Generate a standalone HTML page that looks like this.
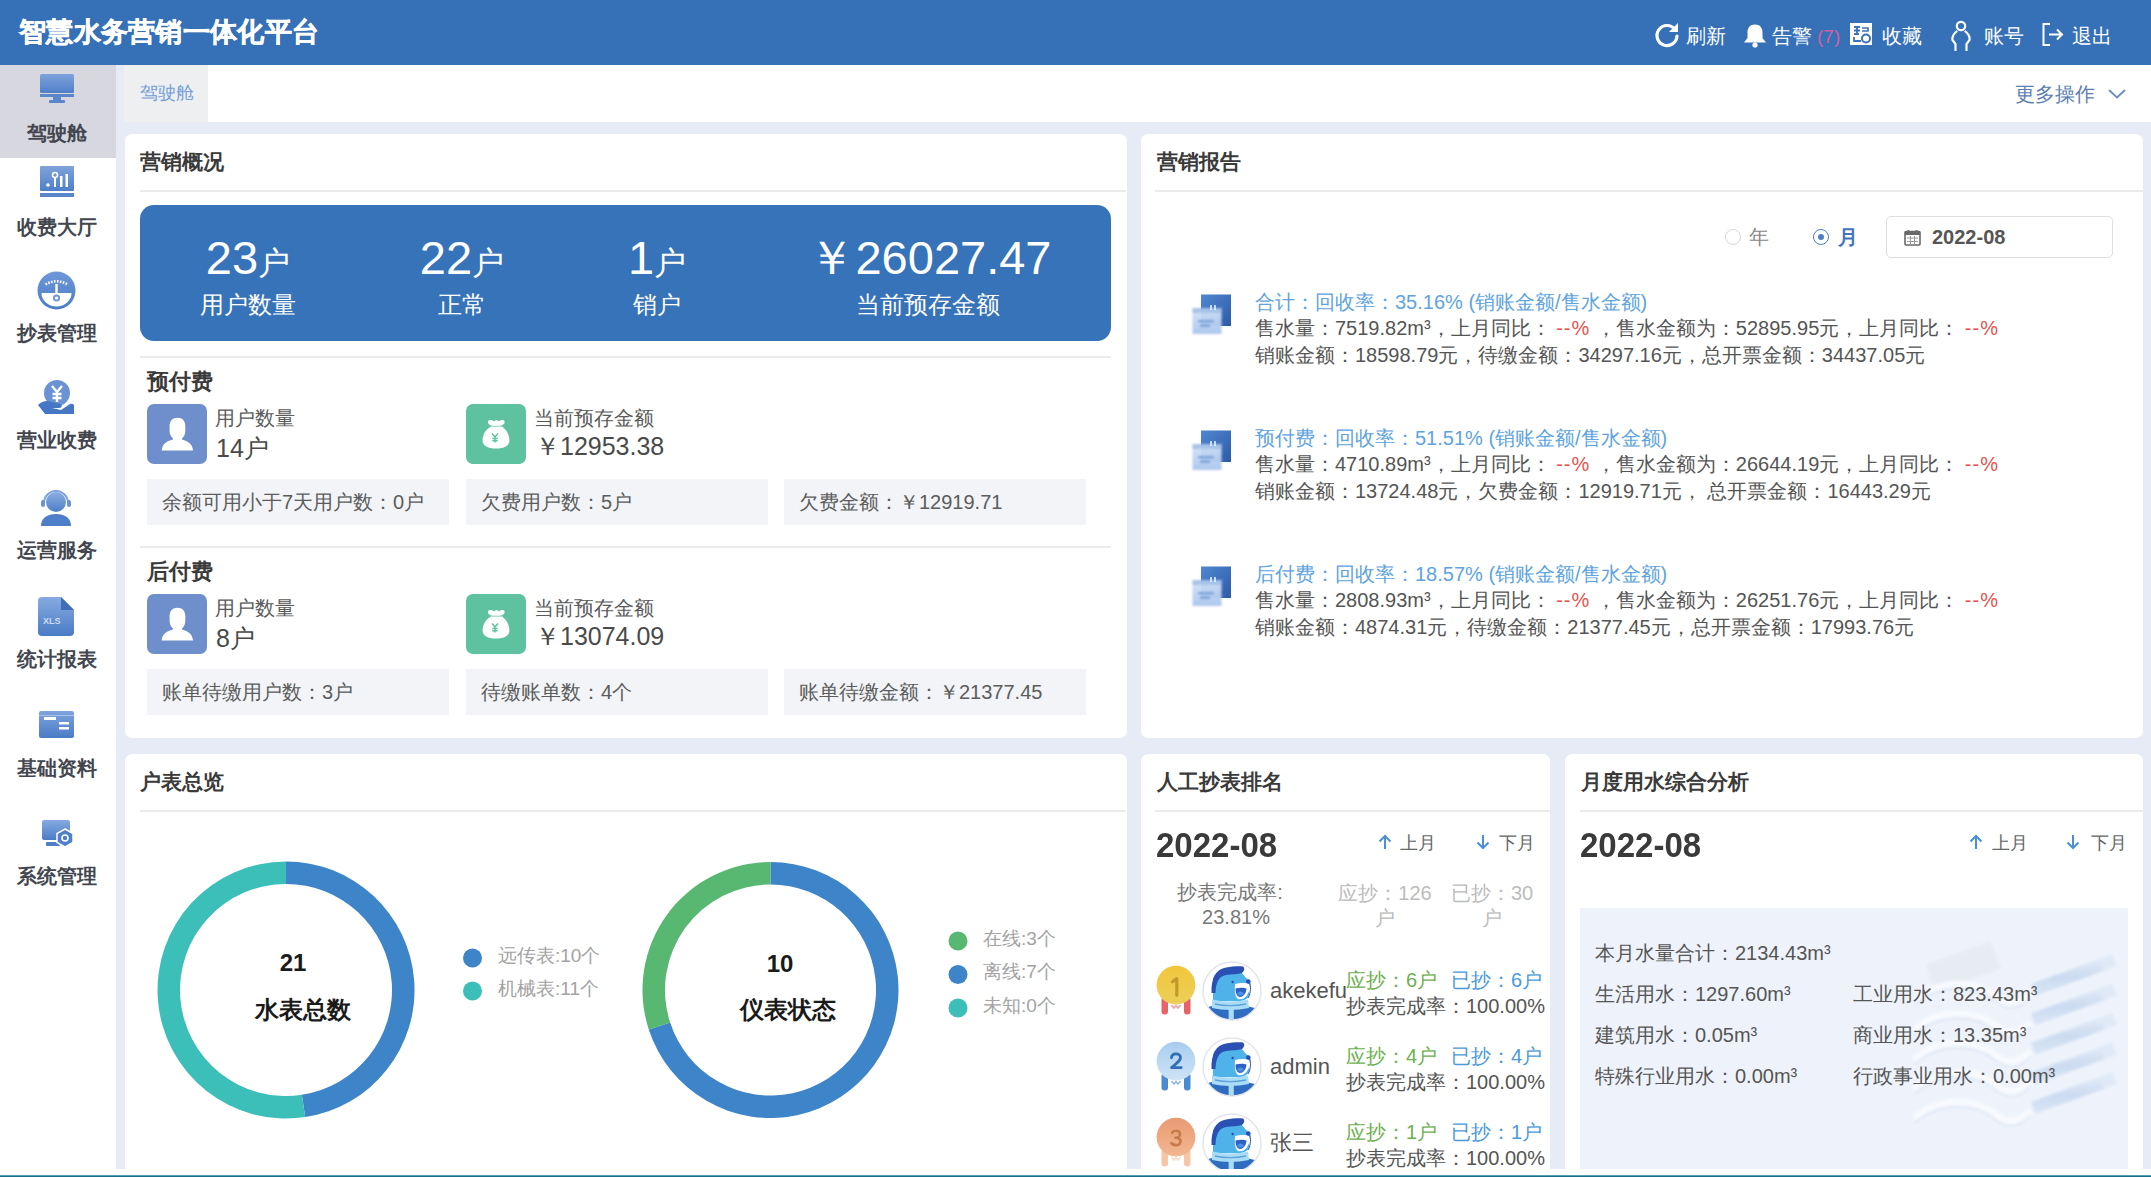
<!DOCTYPE html>
<html><head><meta charset="utf-8">
<style>
*{margin:0;padding:0;box-sizing:border-box}
html,body{width:2151px;height:1177px;overflow:hidden}
body{position:relative;background:#e7ebf5;font-family:"Liberation Sans",sans-serif;color:#333}
.a{position:absolute;white-space:nowrap}
#hdr{left:0;top:0;width:2151px;height:65px;background:#3671b8}
#side{left:0;top:65px;width:116px;height:1104px;background:#fff}
#tabbar{left:124px;top:65px;width:2027px;height:57px;background:#fff}
.panel{position:absolute;background:#fff;border-radius:7px}
.ptitle{position:absolute;font-size:21px;line-height:21px;font-weight:bold;color:#3a3a3a}
.pline{position:absolute;height:2px;background:#ebebeb}
#bottom{left:0;top:1169px;width:2151px;height:8px;background:#fff}
#tealine{left:0;top:1175px;width:2151px;height:2px;background:linear-gradient(#7fc3d3,#1a6e8a 60%)}
.sitem{position:absolute;left:0;width:114px;text-align:center;font-size:20px;line-height:20px;font-weight:bold;color:#43464f}
.stat{position:absolute;top:233px;width:300px;text-align:center;color:#fff;white-space:nowrap}
.stat .n{font-size:47px;line-height:50px}
.stat .u{font-size:32px;line-height:30px}
.stat .l{font-size:24px;line-height:26px;margin-top:9px}
.ibox{position:absolute;width:60px;height:60px;border-radius:7px}
.lbl{position:absolute;font-size:20px;line-height:20px;color:#5a5a5a;white-space:nowrap}
.val{position:absolute;font-size:25px;line-height:30px;color:#4a4a4a;white-space:nowrap}
.gbox{position:absolute;width:302px;height:46px;background:#f2f4f8;font-size:20px;line-height:46px;padding-left:15px;color:#5c5c5c;white-space:nowrap}
.rl1{position:absolute;left:1255px;font-size:20px;line-height:20px;color:#5ea4de;white-space:pre}
.rl2{position:absolute;left:1255px;font-size:20px;line-height:20px;color:#555;white-space:pre}
.dn{position:absolute;width:100px;text-align:center;font-size:24px;line-height:24px;font-weight:bold;color:#1a1a1a}
.dl{position:absolute;width:200px;text-align:center;font-size:24px;line-height:24px;font-weight:bold;color:#1a1a1a}
.lg{position:absolute;font-size:19px;line-height:19px;color:#a3a3a3;white-space:nowrap}
.ym{position:absolute;font-size:33px;line-height:33px;font-weight:bold;color:#3a3a3a;white-space:nowrap;transform:scaleY(1.08);transform-origin:0 0}
.mm{position:absolute;font-size:18px;line-height:18px;color:#666;white-space:nowrap}
.wl{position:absolute;font-size:20px;line-height:20px;color:#555;white-space:nowrap}
</style></head><body>
<div id="hdr" class="a">
<div class="a" style="left:19px;top:18px;font-size:27px;line-height:28px;font-weight:bold;color:#fff;-webkit-text-stroke:0.5px #fff;letter-spacing:0.3px">智慧水务营销一体化平台</div>
<svg class="a" style="left:1653px;top:21px" width="28" height="28" viewBox="0 0 28 28"><path d="M22 8.5A10 10 0 1 0 24 15" fill="none" stroke="#fff" stroke-width="3.2" stroke-linecap="round"/><path d="M25 2v9h-9z" fill="#fff"/></svg>
<div class="a" style="left:1686px;top:26px;font-size:20px;line-height:20px;color:#fff">刷新</div>
<svg class="a" style="left:1742px;top:23px" width="26" height="26" viewBox="0 0 26 26"><path d="M13 1.5c-5 0-7.5 3.5-7.5 8v5.5L2 19.5h22l-3.5-4.5V9.5c0-4.5-2.5-8-7.5-8z" fill="#fff"/><circle cx="13" cy="22" r="2.6" fill="#fff"/></svg>
<div class="a" style="left:1772px;top:26px;font-size:20px;line-height:20px;color:#fff">告警</div>
<div class="a" style="left:1817px;top:26px;font-size:19px;line-height:21px;color:#d0609a">(7)</div>
<svg class="a" style="left:1849px;top:22px" width="25" height="25" viewBox="0 0 25 25"><rect x="1" y="1" width="22" height="22" fill="#fff"/><path d="M5 5h6M8 5v7M5 8.5h6M5 12h5M5 15v4h7" stroke="#3a73b9" stroke-width="1.8" fill="none"/><circle cx="17" cy="16.5" r="4" fill="none" stroke="#3a73b9" stroke-width="2"/><path d="M13 6h6v3h-6" stroke="#3a73b9" stroke-width="1.6" fill="none"/></svg>
<div class="a" style="left:1882px;top:26px;font-size:20px;line-height:20px;color:#fff">收藏</div>
<svg class="a" style="left:1950px;top:20px" width="22" height="31" viewBox="0 0 22 31"><circle cx="11" cy="6" r="4.2" fill="none" stroke="#fff" stroke-width="2.2"/><path d="M6.5 11.5C3.5 14 2 17 2.5 20l3 4v6M15.5 11.5c3 2.5 4.5 5.5 4 8.5l-3 4v6" fill="none" stroke="#fff" stroke-width="2.2" stroke-linecap="round"/></svg>
<div class="a" style="left:1984px;top:26px;font-size:20px;line-height:20px;color:#fff">账号</div>
<svg class="a" style="left:2041px;top:22px" width="24" height="25" viewBox="0 0 24 25"><path d="M9 2H2.5v21H9" fill="none" stroke="#fff" stroke-width="2"/><path d="M8 12.5h13M16 7.5l5 5-5 5" fill="none" stroke="#fff" stroke-width="2"/></svg>
<div class="a" style="left:2072px;top:26px;font-size:20px;line-height:20px;color:#fff">退出</div>
</div>
<div id="side" class="a"><div class="a" style="left:0;top:0;width:116px;height:93px;background:#d7d7e0"></div></div>
<div class="sitem" style="top:123px">驾驶舱</div>
<div class="sitem" style="top:217px">收费大厅</div>
<div class="sitem" style="top:323px">抄表管理</div>
<div class="sitem" style="top:430px">营业收费</div>
<div class="sitem" style="top:540px">运营服务</div>
<div class="sitem" style="top:649px">统计报表</div>
<div class="sitem" style="top:758px">基础资料</div>
<div class="sitem" style="top:866px">系统管理</div>
<svg class="a" style="left:40px;top:73px" width="34" height="31" viewBox="0 0 34 31"><defs><linearGradient id="gb" x1="0" y1="0" x2="0" y2="1"><stop offset="0" stop-color="#7fa3dc"/><stop offset="1" stop-color="#4f7fc8"/></linearGradient></defs><rect x="0" y="1" width="34" height="19" rx="1.5" fill="url(#gb)"/><rect x="0" y="21" width="34" height="3" fill="#5a86cc"/><rect x="13" y="24" width="8" height="3" fill="#5a86cc"/><rect x="9" y="27" width="16" height="3" rx="1" fill="#5a86cc"/></svg>
<svg class="a" style="left:40px;top:166px" width="34" height="31" viewBox="0 0 34 31"><rect x="0" y="0" width="34" height="25" rx="1" fill="url(#gb)"/><rect x="0" y="27" width="34" height="4" fill="#5a86cc"/><circle cx="8" cy="19" r="1.8" fill="#fff"/><circle cx="15" cy="9" r="2.5" fill="none" stroke="#fff" stroke-width="1.6"/><rect x="14" y="12" width="2" height="9" fill="#fff"/><rect x="20" y="10" width="2.5" height="11" fill="#fff"/><rect x="25.5" y="8" width="2.5" height="13" fill="#fff"/></svg>
<svg class="a" style="left:37px;top:271px" width="39" height="39" viewBox="0 0 39 39"><defs><linearGradient id="gg" x1="0" y1="0" x2="0" y2="1"><stop offset="0" stop-color="#6f98d8"/><stop offset="1" stop-color="#4a7cc6"/></linearGradient></defs><circle cx="19.5" cy="19.5" r="19" fill="url(#gg)"/><path d="M4.5 22h30a15 13.5 0 0 1-30 0z" fill="#fff"/><path d="M8.5 13.5q11-6.5 22 0" fill="none" stroke="#fff" stroke-width="2.6" stroke-dasharray="1.6 1.4"/><path d="M19.5 13v11" stroke="#fff" stroke-width="2.4"/><circle cx="19.5" cy="27" r="3.6" fill="#6f98d8"/><circle cx="19.5" cy="27" r="1.6" fill="#fff"/></svg>
<svg class="a" style="left:37px;top:379px" width="39" height="39" viewBox="0 0 39 39"><circle cx="20" cy="14" r="13" fill="#6b93d3"/><path d="M15 7l5 6 5-6M20 13v10M15.5 15h9M15.5 19h9" stroke="#fff" stroke-width="2.4" fill="none"/><path d="M1 26c4-4 9-5 14-3l8 2c3 1 2 4-1 4h-7l9 2 9-6c3-1 5 1 4 3v7H8z" fill="#4577c4"/></svg>
<svg class="a" style="left:39px;top:489px" width="34" height="38" viewBox="0 0 34 38"><defs><linearGradient id="gh" x1="0" y1="0" x2="0" y2="1"><stop offset="0" stop-color="#8aaee2"/><stop offset="1" stop-color="#4f7fc8"/></linearGradient></defs><circle cx="17" cy="13" r="10" fill="url(#gh)"/><path d="M5 14a12 12 0 0 1 24 0" fill="none" stroke="#7ea2da" stroke-width="2"/><rect x="2" y="11" width="4" height="7" rx="2" fill="#6b93d3"/><rect x="28" y="11" width="4" height="7" rx="2" fill="#6b93d3"/><path d="M2 37c0-8 6-12 15-12s15 4 15 12z" fill="#4f7fc8"/></svg>
<svg class="a" style="left:38px;top:597px" width="36" height="39" viewBox="0 0 36 39"><defs><linearGradient id="gx" x1="0" y1="0" x2="0" y2="1"><stop offset="0" stop-color="#86aae0"/><stop offset="1" stop-color="#4a7cc6"/></linearGradient></defs><path d="M4 0h19l13 13v22a4 4 0 0 1-4 4H4a4 4 0 0 1-4-4V4a4 4 0 0 1 4-4z" fill="url(#gx)"/><path d="M23 0v13h13z" fill="#3f6fb8"/><text x="5" y="27" font-size="9" font-family="Liberation Sans" font-weight="bold" fill="#cfdcf2">XLS</text></svg>
<svg class="a" style="left:39px;top:711px" width="35" height="28" viewBox="0 0 35 28"><defs><linearGradient id="gc" x1="0" y1="0" x2="0" y2="1"><stop offset="0" stop-color="#7fa3dc"/><stop offset="1" stop-color="#4a7cc6"/></linearGradient></defs><rect x="0" y="0" width="35" height="27" rx="2" fill="url(#gc)"/><rect x="5" y="6" width="12" height="3" fill="#fff"/><rect x="20" y="11" width="10" height="2.5" fill="#fff"/><rect x="20" y="16" width="10" height="2.5" fill="#fff"/><rect x="0" y="4" width="35" height="1" fill="#a9c1e8"/></svg>
<svg class="a" style="left:42px;top:820px" width="33" height="28" viewBox="0 0 33 28"><defs><linearGradient id="gs" x1="0" y1="0" x2="0" y2="1"><stop offset="0" stop-color="#86aae0"/><stop offset="1" stop-color="#4a7cc6"/></linearGradient></defs><rect x="0" y="0" width="28" height="20" rx="2" fill="url(#gs)"/><rect x="4" y="22" width="14" height="4" rx="1" fill="#4f7fc8"/><path d="M23 9l8 4.5v9L23 27l-8-4.5v-9z" fill="#4f7fc8" stroke="#fff" stroke-width="1.5"/><circle cx="23" cy="18" r="3" fill="none" stroke="#fff" stroke-width="1.6"/></svg>
<div id="tabbar" class="a"><div class="a" style="left:0;top:0;width:84px;height:57px;background:#eeeff0"></div>
<div class="a" style="left:16px;top:19px;font-size:18px;line-height:18px;color:#74a0d8">驾驶舱</div>
<div class="a" style="left:1891px;top:19px;font-size:20px;line-height:20px;color:#5b7eb3">更多操作</div>
<svg class="a" style="left:1984px;top:24px" width="18" height="10" viewBox="0 0 18 10"><path d="M1 1l8 7.5L17 1" fill="none" stroke="#6b8cbd" stroke-width="1.8"/></svg>
</div>

<!-- panels -->
<div class="panel" style="left:125px;top:134px;width:1002px;height:604px"></div>
<div class="panel" style="left:1141px;top:134px;width:1002px;height:604px"></div>
<div class="panel" style="left:125px;top:754px;width:1002px;height:420px"></div>
<div class="panel" style="left:1141px;top:754px;width:409px;height:420px"></div>
<div class="panel" style="left:1565px;top:754px;width:578px;height:420px"></div>

<!-- P1 -->
<div class="ptitle" style="left:140px;top:151px">营销概况</div>
<div class="pline" style="left:140px;top:190px;width:986px"></div>
<div class="a" style="left:140px;top:205px;width:971px;height:136px;background:#3673b9;border-radius:14px"></div>
<div class="stat" style="left:98px"><span class="n">23</span><span class="u">户</span><div class="l">用户数量</div></div>
<div class="stat" style="left:312px"><span class="n">22</span><span class="u">户</span><div class="l">正常</div></div>
<div class="stat" style="left:507px"><span class="n">1</span><span class="u">户</span><div class="l">销户</div></div>
<div class="stat" style="left:780px"><span class="n">￥26027.47</span><div class="l" style="position:relative;left:-2px">当前预存金额</div></div>
<div class="pline" style="left:140px;top:356px;width:971px"></div>
<div class="a" style="left:147px;top:371px;font-size:22px;line-height:22px;font-weight:bold;color:#3a3a3a">预付费</div>
<div class="ibox" style="left:147px;top:404px;background:#6e8fcc"><svg width="60" height="60" viewBox="0 0 60 60"><path d="M30.5 13.7C35.5 13.7 38.3 17 38.3 22v5c0 3-1.3 5.5-3.3 7.5v1c6 1.5 10.5 4.5 11 11H14.7c.5-6.5 4.8-9.5 11.3-11v-1c-2-2-3.4-4.5-3.4-7.5v-5c0-5 2.9-8.3 7.9-8.3z" fill="#fff"/></svg></div>
<div class="lbl" style="left:215px;top:408px">用户数量</div>
<div class="val" style="left:216px;top:433px">14户</div>
<div class="ibox" style="left:466px;top:404px;background:#5ec2a1"><svg width="60" height="60" viewBox="0 0 60 60"><path d="M22 18c0-2.5 4-2.5 6-.5 1.5-2 3.5-2 5 0 2-2 5.6-2 5.6.5s-2.6 3.7-5.6 3.7h-5.5c-3 0-5.5-1.2-5.5-3.7z" fill="#fff"/><path d="M25 22.5h11c4.5 3 7.4 8.5 7.4 14 0 5.5-5.4 8.1-13.4 8.1s-13.4-2.6-13.4-8.1c0-5.5 2.9-11 8.4-14z" fill="#fff"/><path d="M26 29.5l3 3.5 3-3.5M29 33v5.6M26.3 34.5h5.4M26.3 36.8h5.4" stroke="#5ec4a3" stroke-width="1.5" fill="none"/></svg></div>
<div class="lbl" style="left:534px;top:408px">当前预存金额</div>
<div class="val" style="left:535px;top:431px">￥12953.38</div>
<div class="gbox" style="left:147px;top:479px">余额可用小于7天用户数：0户</div>
<div class="gbox" style="left:466px;top:479px">欠费用户数：5户</div>
<div class="gbox" style="left:784px;top:479px">欠费金额：￥12919.71</div>
<div class="pline" style="left:140px;top:546px;width:971px"></div>
<div class="a" style="left:147px;top:561px;font-size:22px;line-height:22px;font-weight:bold;color:#3a3a3a">后付费</div>
<div class="ibox" style="left:147px;top:594px;background:#6e8fcc"><svg width="60" height="60" viewBox="0 0 60 60"><path d="M30.5 13.7C35.5 13.7 38.3 17 38.3 22v5c0 3-1.3 5.5-3.3 7.5v1c6 1.5 10.5 4.5 11 11H14.7c.5-6.5 4.8-9.5 11.3-11v-1c-2-2-3.4-4.5-3.4-7.5v-5c0-5 2.9-8.3 7.9-8.3z" fill="#fff"/></svg></div>
<div class="lbl" style="left:215px;top:598px">用户数量</div>
<div class="val" style="left:216px;top:623px">8户</div>
<div class="ibox" style="left:466px;top:594px;background:#5ec2a1"><svg width="60" height="60" viewBox="0 0 60 60"><path d="M22 18c0-2.5 4-2.5 6-.5 1.5-2 3.5-2 5 0 2-2 5.6-2 5.6.5s-2.6 3.7-5.6 3.7h-5.5c-3 0-5.5-1.2-5.5-3.7z" fill="#fff"/><path d="M25 22.5h11c4.5 3 7.4 8.5 7.4 14 0 5.5-5.4 8.1-13.4 8.1s-13.4-2.6-13.4-8.1c0-5.5 2.9-11 8.4-14z" fill="#fff"/><path d="M26 29.5l3 3.5 3-3.5M29 33v5.6M26.3 34.5h5.4M26.3 36.8h5.4" stroke="#5ec4a3" stroke-width="1.5" fill="none"/></svg></div>
<div class="lbl" style="left:534px;top:598px">当前预存金额</div>
<div class="val" style="left:535px;top:621px">￥13074.09</div>
<div class="gbox" style="left:147px;top:669px">账单待缴用户数：3户</div>
<div class="gbox" style="left:466px;top:669px">待缴账单数：4个</div>
<div class="gbox" style="left:784px;top:669px">账单待缴金额：￥21377.45</div>
<!-- P2 -->
<div class="ptitle" style="left:1157px;top:151px">营销报告</div>
<div class="pline" style="left:1155px;top:190px;width:988px"></div>
<div class="a" style="left:1725px;top:229px;width:16px;height:16px;border:1.5px solid #d6d6d6;border-radius:50%"></div>
<div class="a" style="left:1749px;top:227px;font-size:20px;line-height:20px;color:#888">年</div>
<div class="a" style="left:1813px;top:229px;width:16px;height:16px;border:1.5px solid #4d7fc4;border-radius:50%"><div class="a" style="left:3.5px;top:3.5px;width:6px;height:6px;border-radius:50%;background:#4d7fc4"></div></div>
<div class="a" style="left:1838px;top:227px;font-size:20px;line-height:20px;color:#4473bb;font-weight:bold">月</div>
<div class="a" style="left:1886px;top:216px;width:227px;height:42px;border:1.5px solid #dedede;border-radius:5px"></div>
<svg class="a" style="left:1904px;top:229px" width="17" height="17" viewBox="0 0 17 17"><rect x="1" y="2.5" width="15" height="13.5" rx="1" fill="none" stroke="#6a6a6a" stroke-width="1.6"/><rect x="1" y="2.5" width="15" height="3.5" fill="#6a6a6a"/><path d="M4.5 1v3M12.5 1v3" stroke="#6a6a6a" stroke-width="1.6"/><path d="M3 9h11M3 12.5h11M6.5 7v8M10.5 7v8" stroke="#9a9a9a" stroke-width="1"/></svg>
<div class="a" style="left:1932px;top:227px;font-size:20px;line-height:20px;color:#555;font-weight:bold">2022-08</div>
<svg class="a" style="left:1190px;top:292px" width="44" height="46" viewBox="0 0 44 46"><defs><linearGradient id="rb0" x1="0" y1="0" x2="1" y2="1"><stop offset="0" stop-color="#4f86d2"/><stop offset="1" stop-color="#2d5ba8"/></linearGradient><linearGradient id="rf0" x1="0" y1="0" x2="0" y2="1"><stop offset="0" stop-color="#d6e5f8"/><stop offset="1" stop-color="#a8c4ec"/></linearGradient><filter id="bl0" x="-30%" y="-30%" width="160%" height="160%"><feGaussianBlur stdDeviation="1"/></filter></defs><rect x="11" y="2.5" width="30" height="31.5" fill="url(#rb0)"/><g filter="url(#bl0)"><rect x="2.5" y="16" width="29" height="26" fill="url(#rf0)" opacity=".95"/><rect x="2.5" y="16" width="29" height="5" fill="#9dbbe6" opacity=".8"/><rect x="8" y="28" width="16" height="2.2" fill="#6f9ad6"/><rect x="10" y="32.5" width="10" height="2.2" fill="#6f9ad6"/></g><path d="M21 13v5M25 13v5" stroke="#e6efff" stroke-width="1.6"/></svg>
<div class="rl1" style="top:292px">合计：回收率：35.16% (销账金额/售水金额)</div>
<div class="rl2" style="top:318px">售水量：7519.82m³，上月同比： <span style="color:#e6534f;letter-spacing:1px">--%</span> ，售水金额为：52895.95元，上月同比： <span style="color:#e6534f;letter-spacing:1px">--%</span></div>
<div class="rl2" style="top:345px">销账金额：18598.79元，待缴金额：34297.16元，总开票金额：34437.05元</div>
<svg class="a" style="left:1190px;top:428px" width="44" height="46" viewBox="0 0 44 46"><defs><linearGradient id="rb136" x1="0" y1="0" x2="1" y2="1"><stop offset="0" stop-color="#4f86d2"/><stop offset="1" stop-color="#2d5ba8"/></linearGradient><linearGradient id="rf136" x1="0" y1="0" x2="0" y2="1"><stop offset="0" stop-color="#d6e5f8"/><stop offset="1" stop-color="#a8c4ec"/></linearGradient><filter id="bl136" x="-30%" y="-30%" width="160%" height="160%"><feGaussianBlur stdDeviation="1"/></filter></defs><rect x="11" y="2.5" width="30" height="31.5" fill="url(#rb136)"/><g filter="url(#bl136)"><rect x="2.5" y="16" width="29" height="26" fill="url(#rf136)" opacity=".95"/><rect x="2.5" y="16" width="29" height="5" fill="#9dbbe6" opacity=".8"/><rect x="8" y="28" width="16" height="2.2" fill="#6f9ad6"/><rect x="10" y="32.5" width="10" height="2.2" fill="#6f9ad6"/></g><path d="M21 13v5M25 13v5" stroke="#e6efff" stroke-width="1.6"/></svg>
<div class="rl1" style="top:428px">预付费：回收率：51.51% (销账金额/售水金额)</div>
<div class="rl2" style="top:454px">售水量：4710.89m³，上月同比： <span style="color:#e6534f;letter-spacing:1px">--%</span> ，售水金额为：26644.19元，上月同比： <span style="color:#e6534f;letter-spacing:1px">--%</span></div>
<div class="rl2" style="top:481px">销账金额：13724.48元，欠费金额：12919.71元， 总开票金额：16443.29元</div>
<svg class="a" style="left:1190px;top:564px" width="44" height="46" viewBox="0 0 44 46"><defs><linearGradient id="rb272" x1="0" y1="0" x2="1" y2="1"><stop offset="0" stop-color="#4f86d2"/><stop offset="1" stop-color="#2d5ba8"/></linearGradient><linearGradient id="rf272" x1="0" y1="0" x2="0" y2="1"><stop offset="0" stop-color="#d6e5f8"/><stop offset="1" stop-color="#a8c4ec"/></linearGradient><filter id="bl272" x="-30%" y="-30%" width="160%" height="160%"><feGaussianBlur stdDeviation="1"/></filter></defs><rect x="11" y="2.5" width="30" height="31.5" fill="url(#rb272)"/><g filter="url(#bl272)"><rect x="2.5" y="16" width="29" height="26" fill="url(#rf272)" opacity=".95"/><rect x="2.5" y="16" width="29" height="5" fill="#9dbbe6" opacity=".8"/><rect x="8" y="28" width="16" height="2.2" fill="#6f9ad6"/><rect x="10" y="32.5" width="10" height="2.2" fill="#6f9ad6"/></g><path d="M21 13v5M25 13v5" stroke="#e6efff" stroke-width="1.6"/></svg>
<div class="rl1" style="top:564px">后付费：回收率：18.57% (销账金额/售水金额)</div>
<div class="rl2" style="top:590px">售水量：2808.93m³，上月同比： <span style="color:#e6534f;letter-spacing:1px">--%</span> ，售水金额为：26251.76元，上月同比： <span style="color:#e6534f;letter-spacing:1px">--%</span></div>
<div class="rl2" style="top:617px">销账金额：4874.31元，待缴金额：21377.45元，总开票金额：17993.76元</div>
<!-- P3 -->
<div class="ptitle" style="left:140px;top:771px">户表总览</div>
<div class="pline" style="left:140px;top:810px;width:986px"></div>
<svg class="a" style="left:125px;top:811px" width="1000" height="358" viewBox="125 811 1000 358">
<path d="M286.00 861.50A128.5 128.5 0 0 1 305.22 1117.06L301.85 1094.81A106 106 0 0 0 286.00 884.00Z" fill="#3d84c8"/><path d="M305.22 1117.06A128.5 128.5 0 1 1 286.00 861.50L286.00 884.00A106 106 0 1 0 301.85 1094.81Z" fill="#3cbfb9"/><path d="M770.50 862.00A128 128 0 1 1 648.76 1029.55L670.16 1022.60A105.5 105.5 0 1 0 770.50 884.50Z" fill="#3d84c8"/><path d="M648.76 1029.55A128 128 0 0 1 770.50 862.00L770.50 884.50A105.5 105.5 0 0 0 670.16 1022.60Z" fill="#58b872"/>
<circle cx="472.5" cy="958" r="9.5" fill="#3d84c8"/><circle cx="472.5" cy="991" r="9.5" fill="#3cbfb9"/>
<circle cx="958" cy="941" r="9.5" fill="#58b872"/><circle cx="958" cy="974.5" r="9.5" fill="#3d84c8"/><circle cx="958" cy="1008" r="9.5" fill="#3cbfb9"/>
</svg>
<div class="dn" style="left:243px;top:951px">21</div>
<div class="dl" style="left:203px;top:998px">水表总数</div>
<div class="dn" style="left:730px;top:952px">10</div>
<div class="dl" style="left:688px;top:998px">仪表状态</div>
<div class="lg" style="left:498px;top:946px">远传表:10个</div>
<div class="lg" style="left:498px;top:979px">机械表:11个</div>
<div class="lg" style="left:983px;top:929px">在线:3个</div>
<div class="lg" style="left:983px;top:962px">离线:7个</div>
<div class="lg" style="left:983px;top:996px">未知:0个</div>
<!-- P4 -->
<div class="ptitle" style="left:1157px;top:771px">人工抄表排名</div>
<div class="pline" style="left:1155px;top:810px;width:395px"></div>
<div class="ym" style="left:1156px;top:827px">2022-08</div>
<svg class="a" style="left:1377px;top:834px" width="16" height="16" viewBox="0 0 16 16"><path d="M8 15V2M2.5 7.5L8 2l5.5 5.5" fill="none" stroke="#4a8fd8" stroke-width="2"/></svg>
<div class="mm" style="left:1400px;top:834px">上月</div>
<svg class="a" style="left:1475px;top:834px" width="16" height="16" viewBox="0 0 16 16"><path d="M8 1v13M2.5 8.5L8 14l5.5-5.5" fill="none" stroke="#4a8fd8" stroke-width="2"/></svg>
<div class="mm" style="left:1499px;top:834px">下月</div>
<div class="a" style="left:1150px;top:882px;width:160px;text-align:center;font-size:20px;line-height:20px;color:#777">抄表完成率:</div><div class="a" style="left:1156px;top:906px;width:160px;text-align:center;font-size:20px;line-height:22px;color:#777">23.81%</div>
<div class="a" style="left:1325px;top:881px;width:120px;text-align:center;font-size:20px;line-height:25px;color:#bcbcbc;white-space:normal">应抄：126<br>户</div>
<div class="a" style="left:1432px;top:881px;width:120px;text-align:center;font-size:20px;line-height:25px;color:#bcbcbc;white-space:normal">已抄：30<br>户</div>
<svg class="a" style="left:1154px;top:964px" width="46" height="54" viewBox="0 0 46 54"><defs><linearGradient id="md0" x1="0" y1="0" x2="0" y2="1"><stop offset="0" stop-color="#f2c63c"/><stop offset="1" stop-color="#eccf58"/></linearGradient></defs><rect x="7.5" y="33" width="6.5" height="17.5" rx="3" fill="#e8626a"/><rect x="30" y="33" width="6.5" height="17.5" rx="3" fill="#e8626a"/><path d="M17.5 41l2.5 3 2-2.5 2 2.5 2.5-3" stroke="#e8626a" stroke-width="1.6" fill="none" opacity=".6"/><circle cx="22" cy="21.2" r="19.4" fill="url(#md0)"/><path d="M18.5 17.8L22.8 14.6V31.2" fill="none" stroke="#c29a2a" stroke-width="3.2" stroke-linecap="round" stroke-linejoin="round"/></svg>
<svg class="a" style="left:1202px;top:961px" width="60" height="60" viewBox="0 0 60 60"><defs><clipPath id="av0"><circle cx="30" cy="30" r="28.3"/></clipPath></defs><circle cx="30" cy="30" r="29" fill="#fff" stroke="#e4e4ea" stroke-width="1.4"/><g clip-path="url(#av0)"><path d="M6 60V46c10-3 30-3.5 47 1l1 13z" fill="#2f6bc0"/><path d="M11 40V20c0-7 6-11 14-11h8c5 0 8 4 11 8l3 2c2 2 1 5 0 7v8c-1 4-5 6-11 6z" fill="#4fb3ea"/><path d="M10 38.5c10 2.5 26 2.5 36 0l1 8.5c-12 2.5-26 2.5-37 0z" fill="#a9dcf7"/><path d="M13 43c9 2 21 2 31 0" stroke="#5d9fd8" stroke-width="1.3" fill="none"/><path d="M9.5 32C9 17 14 8 24 6.5c6-1 13-1.5 17-1 2 1.5 1.5 4.5-1 6.5-4 1.5-10 1-16 2-7 1.5-10 6.5-10.5 18z" fill="#2a50b3"/><circle cx="46.3" cy="20.6" r="2.3" fill="#2a50b3"/><circle cx="30.7" cy="21" r="1.2" fill="#2a50b3"/><path d="M33 23c5-1.5 11-1.5 14 0v7c-2 6-6 9-11 8-3-2-3.5-8-3-15z" fill="#fff"/><path d="M33.5 27.5c3.5-1 8.5-1 11 0-.5 5.5-3.5 8.5-6.5 8.5s-4.5-4-4.5-8.5z" fill="#2d62c4"/><ellipse cx="38.5" cy="32.5" rx="3" ry="2" fill="#4a90e0"/><path d="M47.5 21c1.5 4 1.5 11-1.5 16" stroke="#2a50b3" stroke-width="1" fill="none"/><rect x="26.6" y="47.5" width="5.2" height="13" fill="#a9dcf7"/></g></svg>
<div class="a" style="left:1270px;top:980px;font-size:22px;line-height:22px;color:#555">akekefu</div>
<div class="a" style="left:1346px;top:970px;font-size:20px;line-height:20px;color:#6db050">应抄：6户</div>
<div class="a" style="left:1451px;top:970px;font-size:20px;line-height:20px;color:#4b9bd9">已抄：6户</div>
<div class="a" style="left:1346px;top:996px;font-size:20px;line-height:20px;color:#555">抄表完成率：100.00%</div>
<svg class="a" style="left:1154px;top:1040px" width="46" height="54" viewBox="0 0 46 54"><defs><linearGradient id="md1" x1="0" y1="0" x2="0" y2="1"><stop offset="0" stop-color="#a9cdef"/><stop offset="1" stop-color="#cfe3f6"/></linearGradient></defs><rect x="7.5" y="33" width="6.5" height="17.5" rx="3" fill="#4a8ad0"/><rect x="30" y="33" width="6.5" height="17.5" rx="3" fill="#4a8ad0"/><path d="M17.5 41l2.5 3 2-2.5 2 2.5 2.5-3" stroke="#4a8ad0" stroke-width="1.6" fill="none" opacity=".6"/><circle cx="22" cy="21.2" r="19.4" fill="url(#md1)"/><path d="M17.5 17.8C17.5 15.2 19.5 13.8 22 13.8s4.5 1.5 4.5 3.8c0 3-3 5-9 10H27.2" fill="none" stroke="#2f6fb8" stroke-width="2.8" stroke-linecap="round" stroke-linejoin="round"/></svg>
<svg class="a" style="left:1202px;top:1037px" width="60" height="60" viewBox="0 0 60 60"><defs><clipPath id="av1"><circle cx="30" cy="30" r="28.3"/></clipPath></defs><circle cx="30" cy="30" r="29" fill="#fff" stroke="#e4e4ea" stroke-width="1.4"/><g clip-path="url(#av1)"><path d="M6 60V46c10-3 30-3.5 47 1l1 13z" fill="#2f6bc0"/><path d="M11 40V20c0-7 6-11 14-11h8c5 0 8 4 11 8l3 2c2 2 1 5 0 7v8c-1 4-5 6-11 6z" fill="#4fb3ea"/><path d="M10 38.5c10 2.5 26 2.5 36 0l1 8.5c-12 2.5-26 2.5-37 0z" fill="#a9dcf7"/><path d="M13 43c9 2 21 2 31 0" stroke="#5d9fd8" stroke-width="1.3" fill="none"/><path d="M9.5 32C9 17 14 8 24 6.5c6-1 13-1.5 17-1 2 1.5 1.5 4.5-1 6.5-4 1.5-10 1-16 2-7 1.5-10 6.5-10.5 18z" fill="#2a50b3"/><circle cx="46.3" cy="20.6" r="2.3" fill="#2a50b3"/><circle cx="30.7" cy="21" r="1.2" fill="#2a50b3"/><path d="M33 23c5-1.5 11-1.5 14 0v7c-2 6-6 9-11 8-3-2-3.5-8-3-15z" fill="#fff"/><path d="M33.5 27.5c3.5-1 8.5-1 11 0-.5 5.5-3.5 8.5-6.5 8.5s-4.5-4-4.5-8.5z" fill="#2d62c4"/><ellipse cx="38.5" cy="32.5" rx="3" ry="2" fill="#4a90e0"/><path d="M47.5 21c1.5 4 1.5 11-1.5 16" stroke="#2a50b3" stroke-width="1" fill="none"/><rect x="26.6" y="47.5" width="5.2" height="13" fill="#a9dcf7"/></g></svg>
<div class="a" style="left:1270px;top:1056px;font-size:22px;line-height:22px;color:#555">admin</div>
<div class="a" style="left:1346px;top:1046px;font-size:20px;line-height:20px;color:#6db050">应抄：4户</div>
<div class="a" style="left:1451px;top:1046px;font-size:20px;line-height:20px;color:#4b9bd9">已抄：4户</div>
<div class="a" style="left:1346px;top:1072px;font-size:20px;line-height:20px;color:#555">抄表完成率：100.00%</div>
<svg class="a" style="left:1154px;top:1116px" width="46" height="54" viewBox="0 0 46 54"><defs><linearGradient id="md2" x1="0" y1="0" x2="0" y2="1"><stop offset="0" stop-color="#e99b72"/><stop offset="1" stop-color="#f2b791"/></linearGradient></defs><rect x="7.5" y="33" width="6.5" height="17.5" rx="3" fill="#f5c7a6"/><rect x="30" y="33" width="6.5" height="17.5" rx="3" fill="#f5c7a6"/><path d="M17.5 41l2.5 3 2-2.5 2 2.5 2.5-3" stroke="#f5c7a6" stroke-width="1.6" fill="none" opacity=".6"/><circle cx="22" cy="21.2" r="19.4" fill="url(#md2)"/><path d="M18 16.8c1-1.4 2.4-2 4-2 2.5 0 4 1.5 4 3.4 0 2-2 3.5-4.5 3.5 3 0 5 1.5 5 3.8 0 2.2-2 3.6-4.5 3.6-2 0-3.6-.7-4.6-2" fill="none" stroke="#c47a4a" stroke-width="2.6" stroke-linecap="round" stroke-linejoin="round"/></svg>
<svg class="a" style="left:1202px;top:1113px" width="60" height="60" viewBox="0 0 60 60"><defs><clipPath id="av2"><circle cx="30" cy="30" r="28.3"/></clipPath></defs><circle cx="30" cy="30" r="29" fill="#fff" stroke="#e4e4ea" stroke-width="1.4"/><g clip-path="url(#av2)"><path d="M6 60V46c10-3 30-3.5 47 1l1 13z" fill="#2f6bc0"/><path d="M11 40V20c0-7 6-11 14-11h8c5 0 8 4 11 8l3 2c2 2 1 5 0 7v8c-1 4-5 6-11 6z" fill="#4fb3ea"/><path d="M10 38.5c10 2.5 26 2.5 36 0l1 8.5c-12 2.5-26 2.5-37 0z" fill="#a9dcf7"/><path d="M13 43c9 2 21 2 31 0" stroke="#5d9fd8" stroke-width="1.3" fill="none"/><path d="M9.5 32C9 17 14 8 24 6.5c6-1 13-1.5 17-1 2 1.5 1.5 4.5-1 6.5-4 1.5-10 1-16 2-7 1.5-10 6.5-10.5 18z" fill="#2a50b3"/><circle cx="46.3" cy="20.6" r="2.3" fill="#2a50b3"/><circle cx="30.7" cy="21" r="1.2" fill="#2a50b3"/><path d="M33 23c5-1.5 11-1.5 14 0v7c-2 6-6 9-11 8-3-2-3.5-8-3-15z" fill="#fff"/><path d="M33.5 27.5c3.5-1 8.5-1 11 0-.5 5.5-3.5 8.5-6.5 8.5s-4.5-4-4.5-8.5z" fill="#2d62c4"/><ellipse cx="38.5" cy="32.5" rx="3" ry="2" fill="#4a90e0"/><path d="M47.5 21c1.5 4 1.5 11-1.5 16" stroke="#2a50b3" stroke-width="1" fill="none"/><rect x="26.6" y="47.5" width="5.2" height="13" fill="#a9dcf7"/></g></svg>
<div class="a" style="left:1270px;top:1132px;font-size:22px;line-height:22px;color:#555">张三</div>
<div class="a" style="left:1346px;top:1122px;font-size:20px;line-height:20px;color:#6db050">应抄：1户</div>
<div class="a" style="left:1451px;top:1122px;font-size:20px;line-height:20px;color:#4b9bd9">已抄：1户</div>
<div class="a" style="left:1346px;top:1148px;font-size:20px;line-height:20px;color:#555">抄表完成率：100.00%</div>
<!-- P5 -->
<div class="ptitle" style="left:1581px;top:771px">月度用水综合分析</div>
<div class="pline" style="left:1580px;top:810px;width:563px"></div>
<div class="ym" style="left:1580px;top:827px">2022-08</div>
<svg class="a" style="left:1968px;top:834px" width="16" height="16" viewBox="0 0 16 16"><path d="M8 15V2M2.5 7.5L8 2l5.5 5.5" fill="none" stroke="#4a8fd8" stroke-width="2"/></svg>
<div class="mm" style="left:1992px;top:834px">上月</div>
<svg class="a" style="left:2065px;top:834px" width="16" height="16" viewBox="0 0 16 16"><path d="M8 1v13M2.5 8.5L8 14l5.5-5.5" fill="none" stroke="#4a8fd8" stroke-width="2"/></svg>
<div class="mm" style="left:2091px;top:834px">下月</div>
<div class="a" style="left:1580px;top:908px;width:548px;height:261px;background:#eef3fb"></div>
<svg class="a" style="left:1900px;top:930px" width="228" height="220" viewBox="1900 930 228 220"><defs><linearGradient id="tg" x1="0" y1="0" x2="0" y2="1"><stop offset="0" stop-color="#e8eff9"/><stop offset=".55" stop-color="#c3d5ee"/><stop offset="1" stop-color="#d7e4f5"/></linearGradient><filter id="pb"><feGaussianBlur stdDeviation="1.4"/></filter></defs><g filter="url(#pb)" opacity=".8"><rect x="1928" y="952" width="70" height="30" fill="#e6ebf2" transform="rotate(-20 1962 965)"/><path d="M1915 1001.0 C1940 979.0 1975 981.0 1995 997.0 C2010 1009.0 2022 1003.0 2031 993.0" fill="none" stroke="#fafcff" stroke-width="8"/><path d="M1915 1005.0 C1940 983.0 1975 985.0 1995 1001.0 C2010 1013.0 2022 1007.0 2031 997.0" fill="none" stroke="#cddaed" stroke-width="1.3"/><path d="M2031 984.0L2112 954.0L2117 966.0L2035 996.0z" fill="url(#tg)"/><path d="M2100 958.5L2112 954.0L2117 966.0L2104 970.5z" fill="#dde8f6"/><path d="M1915 1030.5 C1940 1008.5 1975 1010.5 1995 1026.5 C2010 1038.5 2022 1032.5 2031 1022.5" fill="none" stroke="#fafcff" stroke-width="8"/><path d="M1915 1034.5 C1940 1012.5 1975 1014.5 1995 1030.5 C2010 1042.5 2022 1036.5 2031 1026.5" fill="none" stroke="#cddaed" stroke-width="1.3"/><path d="M2031 1013.5L2112 983.5L2117 995.5L2035 1025.5z" fill="url(#tg)"/><path d="M2100 988.0L2112 983.5L2117 995.5L2104 1000.0z" fill="#dde8f6"/><path d="M1915 1060.0 C1940 1038.0 1975 1040.0 1995 1056.0 C2010 1068.0 2022 1062.0 2031 1052.0" fill="none" stroke="#fafcff" stroke-width="8"/><path d="M1915 1064.0 C1940 1042.0 1975 1044.0 1995 1060.0 C2010 1072.0 2022 1066.0 2031 1056.0" fill="none" stroke="#cddaed" stroke-width="1.3"/><path d="M2031 1043.0L2112 1013.0L2117 1025.0L2035 1055.0z" fill="url(#tg)"/><path d="M2100 1017.5L2112 1013.0L2117 1025.0L2104 1029.5z" fill="#dde8f6"/><path d="M1915 1089.5 C1940 1067.5 1975 1069.5 1995 1085.5 C2010 1097.5 2022 1091.5 2031 1081.5" fill="none" stroke="#fafcff" stroke-width="8"/><path d="M1915 1093.5 C1940 1071.5 1975 1073.5 1995 1089.5 C2010 1101.5 2022 1095.5 2031 1085.5" fill="none" stroke="#cddaed" stroke-width="1.3"/><path d="M2031 1072.5L2112 1042.5L2117 1054.5L2035 1084.5z" fill="url(#tg)"/><path d="M2100 1047.0L2112 1042.5L2117 1054.5L2104 1059.0z" fill="#dde8f6"/><path d="M1915 1119.0 C1940 1097.0 1975 1099.0 1995 1115.0 C2010 1127.0 2022 1121.0 2031 1111.0" fill="none" stroke="#fafcff" stroke-width="8"/><path d="M1915 1123.0 C1940 1101.0 1975 1103.0 1995 1119.0 C2010 1131.0 2022 1125.0 2031 1115.0" fill="none" stroke="#cddaed" stroke-width="1.3"/><path d="M2031 1102.0L2112 1072.0L2117 1084.0L2035 1114.0z" fill="url(#tg)"/><path d="M2100 1076.5L2112 1072.0L2117 1084.0L2104 1088.5z" fill="#dde8f6"/></g></svg>
<div class="wl" style="left:1595px;top:943px">本月水量合计：2134.43m³</div>
<div class="wl" style="left:1595px;top:984px">生活用水：1297.60m³</div>
<div class="wl" style="left:1853px;top:984px">工业用水：823.43m³</div>
<div class="wl" style="left:1595px;top:1025px">建筑用水：0.05m³</div>
<div class="wl" style="left:1853px;top:1025px">商业用水：13.35m³</div>
<div class="wl" style="left:1595px;top:1066px">特殊行业用水：0.00m³</div>
<div class="wl" style="left:1853px;top:1066px">行政事业用水：0.00m³</div>
<div id="bottom" class="a"></div>
<div id="tealine" class="a"></div>
</body></html>
